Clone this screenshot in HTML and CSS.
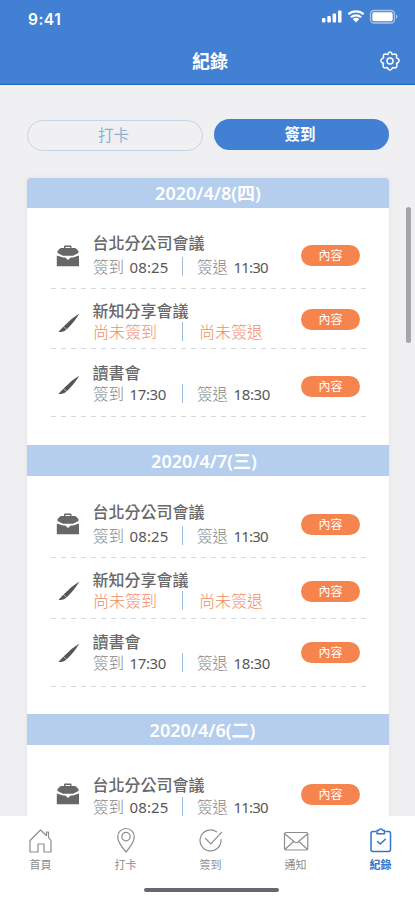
FILE: index.html
```html
<!DOCTYPE html>
<html lang="zh-Hant">
<head>
<meta charset="utf-8">
<meta name="viewport" content="width=device-width, initial-scale=1">
<title>紀錄</title>
<link rel="stylesheet" href="styles.css">
</head>
<body>
<svg class="defs" aria-hidden="true">
  <symbol id="case" viewBox="0 0 24 22">
    <path fill="#676767" fill-rule="evenodd" d="M8 3V1.500Q8 .5 9 .5h5.500q1 0 1 1V3h3.500q1.500.5 3.500 3.300v1.800L17 10.800H7L1.500 8.100V6.300Q3.500 3.500 5 3zM9.500 3h4.700V2H9.500z"/>
    <path fill="#676767" d="M.8 10.500l6.200 2h2.300l2.700 2.400 2.700-2.400H17l6-2v10.800H.8z"/>
  </symbol>
  <symbol id="pen" viewBox="0 0 22 20">
    <path fill="#565656" d="M21.300.5Q17 8.500 8.800 16.300L5.600 13.500Q12.500 5.800 21.300.5zM5.300 13.800l3.200 2.800Q6 19.600.5 18.800z"/>
  </symbol>
</svg>
<div class="phone">
  <header class="top">
    <div class="status">
      <span class="clock">9:41</span>
      <svg class="signals" width="78" height="16" viewBox="0 0 78 16">
        <g fill="#fff">
          <rect x="2" y="10" width="3.500" height="4.500" rx="1"/><rect x="7.300" y="8" width="3.500" height="6.500" rx="1"/><rect x="12.600" y="5.500" width="3.500" height="9" rx="1"/><rect x="18" y="2.500" width="3.500" height="12" rx="1"/>
          <path d="M36 14.500l-3.200-3.400a4.500 4.500 0 0 1 6.400 0z"/>
        </g>
        <path d="M28.300 6.300a11.500 11.500 0 0 1 15.400 0M30.900 9.300a7.600 7.600 0 0 1 10.200 0" fill="none" stroke="#fff" stroke-width="2.200"/>
        <rect x="50.500" y="2.500" width="24" height="12.500" rx="3.500" fill="none" stroke="#a9c5ec" stroke-width="1.300"/>
        <rect x="52.300" y="4.300" width="20.400" height="8.900" rx="1.600" fill="#fff"/>
        <path d="M76 6.800v4q1.500-.6 1.500-2t-1.500-2z" fill="#a9c5ec"/>
      </svg>
    </div>
    <div class="bar">
      <h1>紀錄</h1>
      <svg class="gear" width="20" height="20" viewBox="0 0 20 20" fill="none" stroke="#fff" stroke-width="1.500" stroke-linejoin="round">
        <path d="M8.600 1.800Q10 .2 11.400 1.800L12.300 3.600 14.300 3Q16.400 2.900 16.700 4.600L16.400 6.800 18.300 7.900Q19.800 9.600 18.300 11.400L16.500 12.500 17 14.700Q16.900 16.700 15 16.900L12.800 16.500 11.500 18.300Q10 19.900 8.500 18.300L7.200 16.500 5 16.900Q3.100 16.700 3 14.700L3.500 12.500 1.700 11.400Q.2 9.600 1.700 7.900L3.600 6.800 3.300 4.600Q3.600 2.900 5.700 3L7.700 3.600z"/>
        <circle cx="10" cy="10" r="3"/>
      </svg>
    </div>
  </header>

  <main class="content">
    <div class="switch">
      <button class="pill">打卡</button>
      <button class="pill pill-on">簽到</button>
    </div>

    <div class="card">
      <section class="day">
        <h2>2020/4/8(四)</h2>
        <article class="row first">
          <svg class="icon case"><use href="#case"/></svg>
          <div class="info"><h3>台北分公司會議</h3><p><span class="in">簽到 <b>08:25</b></span><span class="out">簽退 <b class="tight">11:30</b></span></p></div>
          <button class="more">內容</button>
        </article>
        <article class="row second">
          <svg class="icon pen"><use href="#pen"/></svg>
          <div class="info"><h3>新知分享會議</h3><p class="missing"><span class="in">尚未簽到</span><span class="out">尚未簽退</span></p></div>
          <button class="more">內容</button>
        </article>
        <article class="row third">
          <svg class="icon pen"><use href="#pen"/></svg>
          <div class="info"><h3>讀書會</h3><p><span class="in">簽到 <b class="snug">17:30</b></span><span class="out">簽退 <b class="snug">18:30</b></span></p></div>
          <button class="more">內容</button>
        </article>
      </section>
      <section class="day tuesday">
        <h2>2020/4/7(三)</h2>
        <article class="row first">
          <svg class="icon case"><use href="#case"/></svg>
          <div class="info"><h3>台北分公司會議</h3><p><span class="in">簽到 <b>08:25</b></span><span class="out">簽退 <b class="tight">11:30</b></span></p></div>
          <button class="more">內容</button>
        </article>
        <article class="row second">
          <svg class="icon pen"><use href="#pen"/></svg>
          <div class="info"><h3>新知分享會議</h3><p class="missing"><span class="in">尚未簽到</span><span class="out">尚未簽退</span></p></div>
          <button class="more">內容</button>
        </article>
        <article class="row third">
          <svg class="icon pen"><use href="#pen"/></svg>
          <div class="info"><h3>讀書會</h3><p><span class="in">簽到 <b class="snug">17:30</b></span><span class="out">簽退 <b class="snug">18:30</b></span></p></div>
          <button class="more">內容</button>
        </article>
      </section>
      <section class="day monday">
        <h2>2020/4/6(二)</h2>
        <article class="row first">
          <svg class="icon case"><use href="#case"/></svg>
          <div class="info"><h3>台北分公司會議</h3><p><span class="in">簽到 <b>08:25</b></span><span class="out">簽退 <b class="tight">11:30</b></span></p></div>
          <button class="more">內容</button>
        </article>
      </section>
    </div>
    <div class="scroll"></div>
  </main>

  <nav class="tabs">
    <a class="tab"><svg width="26" height="28" viewBox="0 0 26 28"><path d="M2 13.500L12.500 3l4.500 4.200 1.500 1.300V5h2v5.300l2.500 3.200V25h-7v-8h-6v8H2z"/></svg><span>首頁</span></a>
    <a class="tab"><svg width="26" height="28" viewBox="0 0 26 28"><path d="M13 25Q4.700 15.500 4.700 9.800a8.300 8.300 0 0 1 16.600 0Q21.300 15.500 13 25z"/><circle cx="13" cy="9.600" r="4.200"/></svg><span>打卡</span></a>
    <a class="tab"><svg width="26" height="28" viewBox="0 0 26 28"><path d="M18.500 4.800A10.500 10.500 0 1 0 23 12.500M7.500 11.500l5.300 5.300L23.500 5.300"/></svg><span>簽到</span></a>
    <a class="tab"><svg width="26" height="28" viewBox="0 0 26 28"><rect x="1.500" y="5.500" width="23.300" height="17.500" rx="1.500"/><path d="M2 7l9.500 8q1.700 1.300 3.400 0L24.500 7M2.500 22l7.500-7M24 22l-7.500-7"/></svg><span>通知</span></a>
    <a class="tab active"><svg width="26" height="28" viewBox="0 0 26 28"><path d="M7.500 4.500H5q-2 0-2 2v16q0 2 2 2h15.500q2 0 2-2v-16q0-2-2-2H18M9.500 14.500l2.800 2.500 5-4.800"/><path d="M9 6.800V3.500h1.500q.5-1.500 2.200-1.500t2.200 1.500h1.600v3.300z"/></svg><span>紀錄</span></a>
  </nav>
  <div class="home"></div>
</div>
</body>
</html>
```
FILE: styles.css
```css
* { box-sizing: border-box; }
body { margin: 0; font-family: "Noto Sans", "Noto Sans CJK TC", sans-serif; background: #f0f0f2; }
h1, h2, h3, p { margin: 0; }
button { border: 0; padding: 0; font-family: inherit; }
.defs { position: absolute; width: 0; height: 0; }
.phone { width: 415px; height: 900px; display: flex; flex-direction: column; overflow: hidden; background: #fff; }

.top { height: 85px; flex: none; background: #4180d3; border-bottom: 1px solid #1767c0; color: #fff; }
.status { height: 37px; display: flex; justify-content: space-between; padding: 8px 17px 0 28px; }
.clock { font: 600 15.500px/23px Inter, sans-serif; letter-spacing: .5px; }
.bar { height: 48px; display: grid; grid-template-columns: 1fr auto 1fr; align-items: center; padding: 0 15px 0 20px; }
.bar h1 { grid-column: 2; font-size: 18px; line-height: 26px; font-weight: 700; }
.gear { justify-self: end; }

.content { flex: 1; min-height: 0; position: relative; background: #f0f0f2; padding: 34px 26px 0 27px; overflow: hidden; }
.switch { display: grid; grid-template-columns: 176px 175px; gap: 11px; height: 32px; }
.pill { height: 31px; margin-top: 1px; border: 1px solid #c3d4e6; border-radius: 16px; background: transparent; color: #8db1d3; font-size: 15.500px; line-height: 27px; padding-right: 3px; }
.pill-on { margin-top: 0; border: 0; background: #4180d3; color: #fff; font-weight: 700; line-height: 31px; }
.card { margin-top: 27px; background: #fff; border-radius: 4px 4px 0 0; overflow: hidden; box-shadow: 0 0 4px #dedee2; height: 700px; }
.day { height: 267px; }
.tuesday { height: 269px; }
.day h2 { height: 30px; background: #b5ceed; color: #fff; text-align: center; font-size: 18px; line-height: 30px; font-weight: 600; }
.tuesday h2 { height: 31px; padding-right: 8px; line-height: 32px; }
.monday h2 { height: 31px; padding-right: 11px; line-height: 32px; }

.row { display: grid; grid-template-columns: 42px 208px 1fr; align-items: start; margin: 0 22px 0 24px; background: repeating-linear-gradient(90deg, #d0d8e0 0 5px, transparent 5px 10px) left bottom / 100% 1.500px no-repeat; }
.first { height: 81px; padding-top: 23px; }
.second { height: 60px; padding-top: 10px; }
.third { height: 68px; padding-top: 12px; }
.tuesday .first { height: 82px; padding-top: 24px; }
.tuesday .second { height: 61px; padding-top: 10px; }
.tuesday .third { padding-top: 11px; }
.monday .first { padding-top: 28px; }
.icon { display: block; }
.case { width: 24px; height: 22px; margin: 14px 0 0 5px; }
.tuesday .case { margin-top: 13px; }
.monday .case { margin-top: 10px; }
.pen { width: 22px; height: 20px; margin: 14px 0 0 7px; }
.tuesday .pen { margin-top: 13px; }
.info h3 { font-size: 16px; line-height: 24px; font-weight: 500; color: #686868; margin-left: -.5px; }
.info p { display: flex; font-size: 15.500px; line-height: 20px; font-weight: 300; color: #858585; white-space: nowrap; }
.first .info p { margin-top: 2px; }
.second .info p, .third .info p { margin-top: -1px; }
.monday .first .info p { margin-top: 0; }
.info b { font-size: 15px; font-weight: 400; color: #585858; margin-left: 1.500px; letter-spacing: .1px; }
.info .tight { letter-spacing: -.8px; }
.info .snug { letter-spacing: -.4px; }
.in { width: 90px; border-right: 1.500px solid #9cbfdd; height: 19px; }
.out { padding-left: 14px; }
.info .missing { color: #f08b61; font-size: 16px; font-weight: 300; }
.missing .out { padding-left: 16px; }
.more { width: 59px; height: 21px; border-radius: 11px; background: #f5844e; color: #fff; font-size: 12px; line-height: 20px; }
.first .more { margin-top: 14px; }
.second .more { margin-top: 10px; }
.third .more { margin-top: 15px; }
.tuesday .second .more { margin-top: 13px; }
.tuesday .third .more { margin-top: 12px; }
.monday .first .more { margin-top: 11px; }
.scroll { position: absolute; left: 406px; top: 122px; width: 5px; height: 136px; border-radius: 3px; background: #a5a5a7; }

.tabs { flex: none; height: 65px; display: flex; padding: 11px 0 0; background: #fff; }
.tab { width: 85px; flex: none; display: flex; flex-direction: column; align-items: center; gap: 2px; color: #8d8d8d; font-size: 11px; line-height: 16px; }
.tab:first-child { margin-left: -2px; }
.tab svg { fill: none; stroke: currentColor; stroke-width: 1.200; stroke-linejoin: round; stroke-linecap: round; }
.active { color: #3575c8; font-weight: 700; }
.active svg { stroke-width: 1.500; }
.home { width: 135px; height: 4px; border-radius: 2px; background: #696572; margin: 7px 0 8px 144px; }
```
